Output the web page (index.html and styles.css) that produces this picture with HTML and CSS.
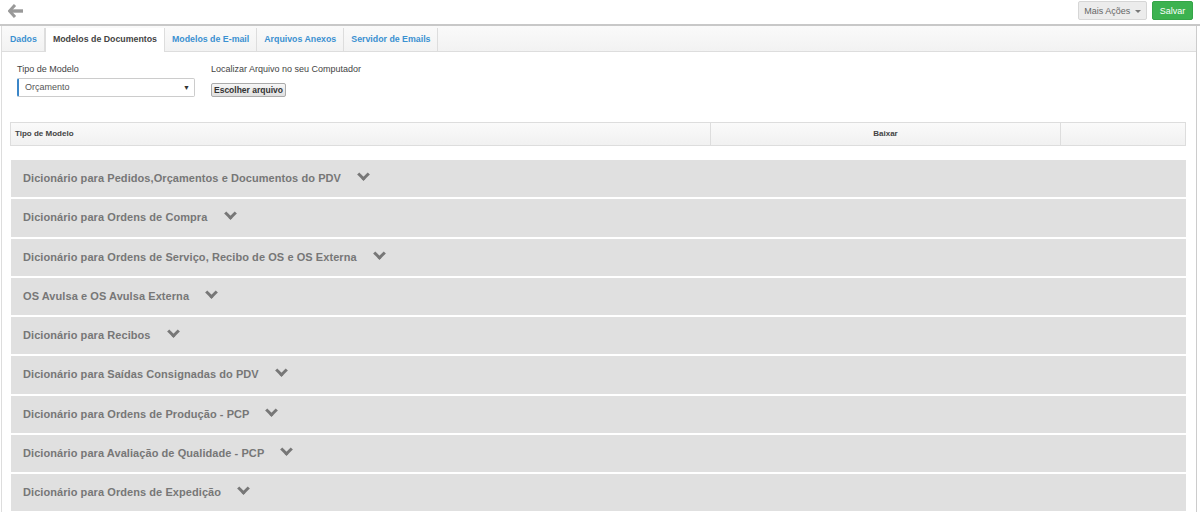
FILE: index.html
```
<!DOCTYPE html>
<html lang="pt-BR">
<head>
  <meta charset="UTF-8">
  <title>Modelos de Documentos</title>
  <link rel="stylesheet" href="styles.css">
</head>
<body>
  <div class="topbar">
    <svg class="back" width="16" height="14" viewBox="0 0 16 14">
      <path d="M7 1 L1.5 7 L7 13" fill="none" stroke="#999" stroke-width="3" stroke-linejoin="miter"/>
      <path d="M2 7 H15" stroke="#999" stroke-width="3.4"/>
    </svg>
    <div class="actions">
      <button class="btn-more">Mais Ações <span class="caret"></span></button>
      <button class="btn-save">Salvar</button>
    </div>
  </div>

  <div class="panel">
    <ul class="tabs">
      <li>Dados</li>
      <li class="active">Modelos de Documentos</li>
      <li>Modelos de E-mail</li>
      <li>Arquivos Anexos</li>
      <li>Servidor de Emails</li>
    </ul>

    <div class="content">
      <div class="form-row">
        <div class="field">
          <label>Tipo de Modelo</label>
          <div class="select">Orçamento <span class="arrow">▼</span></div>
        </div>
        <div class="field">
          <label>Localizar Arquivo no seu Computador</label>
          <button class="file-btn">Escolher arquivo</button>
        </div>
      </div>

      <div class="grid-head">
        <div class="col-tipo">Tipo de Modelo</div>
        <div class="col-baixar">Baixar</div>
        <div class="col-extra"></div>
      </div>

      <div class="accordion">
        <div class="acc-item">Dicionário para Pedidos,Orçamentos e Documentos do PDV <span class="chev"></span></div>
        <div class="acc-item">Dicionário para Ordens de Compra <span class="chev"></span></div>
        <div class="acc-item">Dicionário para Ordens de Serviço, Recibo de OS e OS Externa <span class="chev"></span></div>
        <div class="acc-item">OS Avulsa e OS Avulsa Externa <span class="chev"></span></div>
        <div class="acc-item">Dicionário para Recibos <span class="chev"></span></div>
        <div class="acc-item">Dicionário para Saídas Consignadas do PDV <span class="chev"></span></div>
        <div class="acc-item">Dicionário para Ordens de Produção - PCP <span class="chev"></span></div>
        <div class="acc-item">Dicionário para Avaliação de Qualidade - PCP <span class="chev"></span></div>
        <div class="acc-item">Dicionário para Ordens de Expedição <span class="chev"></span></div>
      </div>
    </div>
  </div>
</body>
</html>
```

FILE: styles.css
```
body {
  font-family: 'Liberation Sans', Arial, sans-serif;
  margin: 0;
  background-color: #fff;
  color: #333;
}
.topbar {
  height: 24px;
  display: flex;
  align-items: center;
  justify-content: space-between;
  padding: 0 7px 0 8px;
  border-bottom: 2px solid #c8c8c8;
}
.back {
  display: block;
  margin-top: -2px;
}
.actions {
  display: flex;
  gap: 5px;
  margin-top: -3px;
}
.btn-more,
.btn-save {
  font-family: 'Liberation Sans', Arial, sans-serif;
  font-size: 9px;
  height: 19px;
  border-radius: 2px;
  white-space: nowrap;
  cursor: pointer;
}
.btn-more {
  background-color: #ececec;
  border: 1px solid #d6d6d6;
  color: #666;
  width: 69px;
  padding: 0;
}
.btn-save {
  background-color: #3cb250;
  border: 1px solid #35a548;
  color: #fff;
  width: 41px;
  padding: 0;
}
.caret {
  display: inline-block;
  border-top: 3px solid #777;
  border-left: 3px solid transparent;
  border-right: 3px solid transparent;
  vertical-align: middle;
  margin-left: 2px;
}
.panel {
  margin: 0 3px 0 1px;
  border-left: 1px solid #ddd;
  border-right: 1px solid #ccc;
  min-height: 486px;
}
.tabs {
  list-style: none;
  margin: 0;
  padding: 2px 0 0 1px;
  display: flex;
  background: linear-gradient(#fafafa, #f2f2f2);
  border-bottom: 1px solid #ddd;
  height: 23px;
}
.tabs li {
  font-size: 8.8px;
  font-weight: bold;
  color: #3b91d1;
  padding: 0 7px;
  line-height: 23px;
  border-right: 1px solid #ddd;
  height: 23px;
}
.tabs li.active {
  background-color: #fff;
  color: #444;
  border-left: 1px solid #ddd;
  height: 24px;
}
.content {
  padding: 10px 10px 0 8px;
}
.form-row {
  display: flex;
  gap: 16px;
  padding-left: 7px;
}
.field label {
  display: block;
  font-size: 9px;
  color: #444;
  margin-top: 2px;
  margin-bottom: 4px;
}
.select {
  width: 169px;
  height: 17px;
  border: 1px solid #ccc;
  border-left: 2px solid #3b86c8;
  border-radius: 2px;
  font-size: 9px;
  color: #555;
  line-height: 17px;
  padding-left: 6px;
  position: relative;
}
.select .arrow {
  position: absolute;
  right: 4px;
  top: 0;
  font-size: 7px;
  color: #333;
}
.file-btn {
  font-family: 'Liberation Sans', Arial, sans-serif;
  font-size: 8.5px;
  font-weight: bold;
  color: #333;
  background: linear-gradient(#f6f6f6, #e0e0e0);
  border: 1px solid #aaa;
  border-radius: 2px;
  height: 14px;
  padding: 0 2px;
  margin-top: 5px;
  line-height: 12px;
}
.grid-head {
  display: flex;
  margin-top: 25px;
  height: 22px;
  border: 1px solid #ddd;
  background: linear-gradient(#fafafa, #f1f1f1);
  font-size: 8px;
  font-weight: bold;
  color: #444;
  line-height: 22px;
}
.col-tipo {
  width: 695px;
  padding-left: 4px;
  border-right: 1px solid #ddd;
}
.col-baixar {
  width: 349px;
  text-align: center;
  border-right: 1px solid #ddd;
}
.col-extra {
  flex: 1;
}
.accordion {
  margin-top: 14px;
  display: flex;
  flex-direction: column;
  gap: 2px;
  padding-left: 1px;
}
.acc-item {
  background-color: #e0e0e0;
  height: 37.25px;
  line-height: 37px;
  padding-left: 12px;
  font-size: 11px;
  font-weight: bold;
  color: #777;
  letter-spacing: 0.07px;
}
.chev {
  display: inline-block;
  width: 6px;
  height: 6px;
  border-right: 3px solid #777;
  border-bottom: 3px solid #777;
  transform: rotate(45deg);
  margin-left: 15px;
  vertical-align: 3px;
}
```
